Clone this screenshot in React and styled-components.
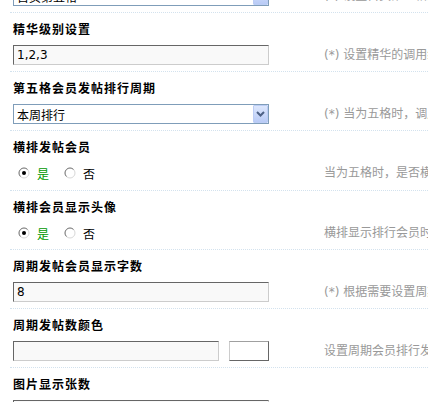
import React from 'react';
import styled, { createGlobalStyle } from 'styled-components';

const GlobalStyle = createGlobalStyle`
    body {
        margin: 0;
        background: #fff;
        overflow: hidden;
        font: 12px "Noto Sans CJK SC", sans-serif;
        color: #000;
    }
`;

const Page = styled.div`
    width: 760px;
    padding-left: 10px;
    margin-top: -17px;
`;

const TitleRow = styled.div`
    height: 29px;
    padding: 2px 0 0 3px;
    box-sizing: border-box;
    line-height: 27px;
    font-weight: 700;
    letter-spacing: 1px;
    color: #000;
`;

const FieldRow = styled.div`
    display: flex;
    align-items: flex-start;
    height: ${p => p.$h || 29}px;
    border-bottom: 1px dotted #d3e2ee;
`;

const FieldCell = styled.div`
    display: flex;
    align-items: center;
    width: 311px;
    flex-shrink: 0;
    padding: 3px 0 0 3px;
    box-sizing: border-box;
`;

const Tip = styled.div`
    padding: 3px 0 0 3px;
    line-height: 20px;
    font-family: "DejaVu Sans", "Noto Sans CJK SC", sans-serif;
    color: #999;
    white-space: nowrap;
`;

const TextInput = styled.input`
    width: ${p => p.$w || 256}px;
    height: 20px;
    box-sizing: border-box;
    margin: 0;
    padding: 0 3px;
    border: 1px solid #ccc;
    border-top-color: #666;
    border-left-color: #666;
    background: #f9f9f9;
    font: 12px "DejaVu Sans", Tahoma, sans-serif;
    color: #000;
    outline: none;
`;

const ColorButton = styled.span`
    width: 40px;
    height: 20px;
    box-sizing: border-box;
    margin-left: 10px;
    border: 1px solid #666;
    border-top-color: #a0a0a0;
    border-left-color: #ccc;
    background: #fff;
`;

const SelectBox = styled.div`
    display: flex;
    align-items: center;
    justify-content: space-between;
    width: 256px;
    height: 20px;
    box-sizing: border-box;
    border: 1px solid #7f9db9;
    background: #fff;
    padding-left: 3px;
`;

const DropButton = styled.span`
    display: flex;
    align-items: center;
    justify-content: center;
    width: 15px;
    height: 18px;
    box-sizing: border-box;
    border: 1px solid #bccdf5;
    border-radius: 1px;
    background: linear-gradient(#dde7fd, #b9cbf6);
`;

const Options = styled.div`
    display: flex;
    align-items: center;
    height: 20px;
`;

const Option = styled.label`
    display: flex;
    align-items: center;
    margin-right: 10px;
    color: ${p => (p.$on ? '#090' : '#000')};
`;

const RadioMark = styled.svg`
    margin: 0 7px 0 5px;
`;

function Radio({ checked }) {
    return (
        <RadioMark width="12" height="12" viewBox="0 0 12 12">
            <circle cx="6" cy="6" r="5" fill="#fff" stroke="#d8d8d8" />
            <path d="M2.46 9.54 A5 5 0 0 1 9.54 2.46" fill="none" stroke="#7a7a7a" />
            {checked && <circle cx="6" cy="6" r="2" fill="#000" />}
        </RadioMark>
    );
}

function Select({ value }) {
    return (
        <SelectBox>
            <span>{value}</span>
            <DropButton>
                <svg width="9" height="6" viewBox="0 0 9 6">
                    <path d="M1 1 L4.5 4.5 L8 1" fill="none" stroke="#4d6185" strokeWidth="2" />
                </svg>
            </DropButton>
        </SelectBox>
    );
}

const sections = [
    { type: 'select', value: '首页第五格', tip: '(*) 设置首页第五格的调用内容' },
    { title: '精华级别设置', type: 'text', value: '1,2,3', tip: '(*) 设置精华的调用级别，多个用半角逗号隔开' },
    { title: '第五格会员发帖排行周期', type: 'select', value: '本周排行', tip: '(*) 当为五格时，调用会员发帖排行的周期' },
    { title: '横排发帖会员', type: 'radio', tip: '当为五格时，是否横排显示发帖会员', h: 30 },
    { title: '横排会员显示头像', type: 'radio', tip: '横排显示排行会员时，是否显示会员头像' },
    { title: '周期发帖会员显示字数', type: 'text', value: '8', tip: '(*) 根据需要设置周期发帖会员名称显示的字数' },
    { title: '周期发帖数颜色', type: 'color', tip: '设置周期会员排行发帖数的颜色' },
    { title: '图片显示张数', type: 'text', value: '', tip: '(*) 设置图片的显示张数' },
];

function Field({ type, value }) {
    if (type === 'select') return <Select value={value} />;
    if (type === 'radio') {
        return (
            <Options>
                <Option $on><Radio checked />是</Option>
                <Option><Radio />否</Option>
            </Options>
        );
    }
    if (type === 'color') {
        return (
            <>
                <TextInput $w={206} readOnly value="" />
                <ColorButton />
            </>
        );
    }
    return <TextInput readOnly value={value} />;
}

function App() {
    return (
        <>
            <GlobalStyle />
            <Page>
                {sections.map((s, i) => (
                    <React.Fragment key={i}>
                        {s.title && <TitleRow>{s.title}</TitleRow>}
                        <FieldRow $h={s.h}>
                            <FieldCell>
                                <Field type={s.type} value={s.value} />
                            </FieldCell>
                            <Tip>{s.tip}</Tip>
                        </FieldRow>
                    </React.Fragment>
                ))}
            </Page>
        </>
    );
}

export default App;
